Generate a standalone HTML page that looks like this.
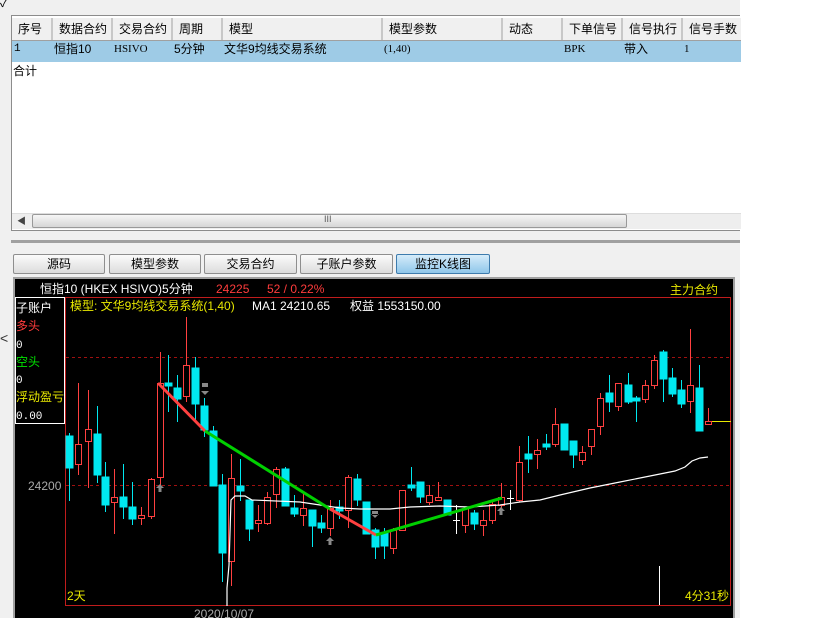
<!DOCTYPE html>
<html><head><meta charset="utf-8"><style>
*{margin:0;padding:0;box-sizing:border-box}
body{width:819px;height:618px;background:#fff;position:relative;overflow:hidden;font-family:"Liberation Sans","Noto Sans CJK SC",sans-serif;font-size:12px;color:#000}
.abs{position:absolute}
#win{left:0;top:0;width:740px;height:618px;background:#f0f0f0}
#tbl{left:11px;top:15px;width:729px;height:216px;background:#fff;border:1px solid #8c8c8c;border-right:none}
.hd{position:absolute;top:2px;height:22px;line-height:22px;padding-left:6px;background:#f0f0f0;border-right:2px solid #c8c8c8;font-size:12px}
.rw{position:absolute;top:25px;left:0;width:729px;height:21px;background:#9ecbe6;font-size:12px;line-height:16px}
.rw span{position:absolute;top:0}
.btn{position:absolute;top:254px;height:20px;border:1px solid #8e8e8e;border-radius:2px;background:linear-gradient(#fbfbfb,#dcdcdc);text-align:center;line-height:18px;font-size:12px}
</style></head><body>
<div id="win" class="abs"></div>
<div class="abs" style="left:0;top:-6px;font-size:12px">✓</div>
<div id="tbl" class="abs">
 <div class="hd" style="left:0;width:41px">序号</div>
 <div class="hd" style="left:41px;width:60px">数据合约</div>
 <div class="hd" style="left:101px;width:60px">交易合约</div>
 <div class="hd" style="left:161px;width:50px">周期</div>
 <div class="hd" style="left:211px;width:160px">模型</div>
 <div class="hd" style="left:371px;width:120px">模型参数</div>
 <div class="hd" style="left:491px;width:60px">动态</div>
 <div class="hd" style="left:551px;width:60px">下单信号</div>
 <div class="hd" style="left:611px;width:60px">信号执行</div>
 <div class="hd" style="left:671px;width:58px;border-right:none">信号手数</div>
 <div class="abs" style="left:0;top:24px;width:729px;height:1px;background:#a0a0a0"></div>
 <div class="rw">
  <span style="left:2px;font-family:'Liberation Mono',monospace;font-size:11px">1</span>
  <span style="left:42px">恒指10</span>
  <span style="left:102px;font-family:'Liberation Serif',serif;font-size:11px">HSIVO</span>
  <span style="left:162px">5分钟</span>
  <span style="left:212px">文华9均线交易系统</span>
  <span style="left:372px;font-family:'Liberation Serif',serif;font-size:11px">(1,40)</span>
  <span style="left:552px;font-family:'Liberation Serif',serif;font-size:11px">BPK</span>
  <span style="left:612px">带入</span>
  <span style="left:672px;font-family:'Liberation Serif',serif;font-size:11px">1</span>
 </div>
 <div class="abs" style="left:1px;top:46px;font-size:12px">合计</div>
 <div class="abs" style="left:0;top:197px;width:729px;height:16px;background:#eee;border-top:1px solid #ddd"></div>
 <div class="abs" style="left:5px;top:198px;font-size:9px;color:#444">◀</div>
 <div class="abs" style="left:20px;top:198px;width:595px;height:14px;border:1px solid #999;border-radius:2px;background:linear-gradient(#f6f6f6,#d6d6d6)"></div>
 <div class="abs" style="left:312px;top:198px;font-size:9px;color:#555">III</div>
</div>
<div class="abs" style="left:11px;top:240px;width:729px;height:3px;background:#a0a0a0"></div>
<div class="btn" style="left:13px;width:92px">源码</div>
<div class="btn" style="left:109px;width:92px">模型参数</div>
<div class="btn" style="left:204px;width:93px">交易合约</div>
<div class="btn" style="left:300px;width:93px">子账户参数</div>
<div class="btn" style="left:396px;width:94px;background:linear-gradient(#d6ecfa,#8fc6ea);border-color:#3d7bad">监控K线图</div>
<div class="abs" style="left:13px;top:277px;width:722px;height:341px;background:#a0a0a0"></div>
<div class="abs" style="left:0;top:330px;font-size:14px;color:#333">&lt;</div>
<svg class="abs" style="left:15px;top:279px" width="718" height="339" viewBox="15 279 718 339" font-family="Liberation Sans, Noto Sans CJK SC, sans-serif">
<rect x="15" y="279" width="718" height="339" fill="#000"/>
<text x="40" y="293" fill="#fff" font-size="12">恒指10  (HKEX HSIVO)5分钟</text>
<text x="216" y="293" fill="#ff3c3c" font-size="12">24225</text>
<text x="267" y="293" fill="#ff3c3c" font-size="12">52 / 0.22%</text>
<text x="670" y="294" fill="#e8e800" font-size="12">主力合约</text>
<rect x="65.5" y="297.5" width="665" height="308" fill="none" stroke="#c01c1c"/>
<rect x="15.5" y="297.5" width="49" height="126" fill="none" stroke="#fff"/>
<g font-size="12">
<text x="16" y="312" fill="#fff">子账户</text>
<text x="16" y="330" fill="#ff3c3c">多头</text>
<text x="16" y="348" fill="#fff" font-family="Liberation Mono,monospace" font-size="11">0</text>
<text x="16" y="366" fill="#00e000">空头</text>
<text x="16" y="383" fill="#fff" font-family="Liberation Mono,monospace" font-size="11">0</text>
<text x="16" y="401" fill="#e8e800">浮动盈亏</text>
<text x="16" y="419" fill="#fff" font-family="Liberation Mono,monospace" font-size="11">0.00</text>
<text x="70" y="310" fill="#e8e800">模型: 文华9均线交易系统(1,40)</text>
<text x="252" y="310" fill="#fff">MA1 24210.65</text>
<text x="350" y="310" fill="#fff">权益 1553150.00</text>
<text x="28" y="490" fill="#aaa">24200</text>
<text x="67" y="600" fill="#e8e800">2天</text>
<text x="685" y="600" fill="#e8e800">4分31秒</text>
<text x="194" y="618" fill="#aaa">2020/10/07</text>
</g>
<line x1="66" y1="357.5" x2="730" y2="357.5" stroke="#a01010" stroke-dasharray="3,3"/>
<line x1="66" y1="485.5" x2="730" y2="485.5" stroke="#a01010" stroke-dasharray="3,3"/>
<line x1="659.5" y1="566" x2="659.5" y2="605" stroke="#fff"/>
<line x1="712" y1="421.5" x2="731" y2="421.5" stroke="#e8e800"/>
<g stroke="#00e8f0" fill="#00e8f0">
<line x1="69.5" y1="433" x2="69.5" y2="501"/><rect x="66" y="436" width="7" height="32"/>
<line x1="97.5" y1="406" x2="97.5" y2="483"/><rect x="94" y="434" width="7" height="41"/>
<line x1="105.5" y1="462" x2="105.5" y2="512"/><rect x="102" y="477" width="7" height="28"/>
<line x1="123.5" y1="464" x2="123.5" y2="519"/><rect x="120" y="497" width="7" height="10"/>
<line x1="132.5" y1="482" x2="132.5" y2="525"/><rect x="129" y="507" width="7" height="12"/>
<line x1="168.5" y1="355" x2="168.5" y2="412"/><rect x="165" y="383" width="7" height="3"/>
<line x1="177.5" y1="375" x2="177.5" y2="422"/><rect x="174" y="388" width="7" height="11"/>
<line x1="195.5" y1="357" x2="195.5" y2="420"/><rect x="192" y="368" width="7" height="36"/>
<line x1="204.5" y1="398" x2="204.5" y2="437"/><rect x="201" y="406" width="7" height="24"/>
<line x1="213.5" y1="426" x2="213.5" y2="486"/><rect x="210" y="431" width="7" height="55"/>
<line x1="222.5" y1="474" x2="222.5" y2="582"/><rect x="219" y="485" width="7" height="68"/>
<line x1="240.5" y1="459" x2="240.5" y2="501"/><rect x="237" y="486" width="7" height="5"/>
<line x1="249.5" y1="500" x2="249.5" y2="541"/><rect x="246" y="500" width="7" height="29"/>
<line x1="285.5" y1="467" x2="285.5" y2="506"/><rect x="282" y="469" width="7" height="37"/>
<line x1="294.5" y1="495" x2="294.5" y2="517"/><rect x="291" y="508" width="7" height="6"/>
<line x1="312.5" y1="510" x2="312.5" y2="547"/><rect x="309" y="510" width="7" height="16"/>
<line x1="321.5" y1="515" x2="321.5" y2="533"/><rect x="318" y="523" width="7" height="5"/>
<line x1="339.5" y1="500" x2="339.5" y2="519"/><rect x="336" y="507" width="7" height="4"/>
<line x1="357.5" y1="474" x2="357.5" y2="506"/><rect x="354" y="479" width="7" height="21"/>
<line x1="366.5" y1="502" x2="366.5" y2="534"/><rect x="363" y="502" width="7" height="32"/>
<line x1="375.5" y1="528" x2="375.5" y2="559"/><rect x="372" y="530" width="7" height="17"/>
<line x1="384.5" y1="528" x2="384.5" y2="559"/><rect x="381" y="533" width="7" height="13"/>
<line x1="411.5" y1="467" x2="411.5" y2="491"/><rect x="408" y="485" width="7" height="3"/>
<line x1="420.5" y1="482" x2="420.5" y2="503"/><rect x="417" y="482" width="7" height="15"/>
<line x1="447.5" y1="500" x2="447.5" y2="515"/><rect x="444" y="500" width="7" height="15"/>
<line x1="474.5" y1="510" x2="474.5" y2="530"/><rect x="471" y="513" width="7" height="11"/>
<line x1="528.5" y1="436" x2="528.5" y2="473"/><rect x="525" y="454" width="7" height="5"/>
<line x1="546.5" y1="434" x2="546.5" y2="450"/><rect x="543" y="444" width="7" height="3"/>
<line x1="564.5" y1="424" x2="564.5" y2="450"/><rect x="561" y="424" width="7" height="26"/>
<line x1="573.5" y1="441" x2="573.5" y2="468"/><rect x="570" y="441" width="7" height="14"/>
<line x1="609.5" y1="375" x2="609.5" y2="412"/><rect x="606" y="393" width="7" height="9"/>
<line x1="628.5" y1="373" x2="628.5" y2="404"/><rect x="625" y="385" width="7" height="17"/>
<line x1="636.5" y1="396" x2="636.5" y2="422"/><rect x="633" y="398" width="7" height="3"/>
<line x1="663.5" y1="350" x2="663.5" y2="402"/><rect x="660" y="352" width="7" height="27"/>
<line x1="672.5" y1="368" x2="672.5" y2="397"/><rect x="669" y="378" width="7" height="16"/>
<line x1="681.5" y1="380" x2="681.5" y2="408"/><rect x="678" y="390" width="7" height="14"/>
<line x1="699.5" y1="365" x2="699.5" y2="431"/><rect x="696" y="388" width="7" height="43"/>
</g>
<g stroke="#ff4040" fill="none">
<line x1="78.5" y1="383" x2="78.5" y2="475"/><rect x="75.5" y="444.5" width="6" height="20" fill="#000"/>
<line x1="88.5" y1="390" x2="88.5" y2="488"/><rect x="85.5" y="429.5" width="6" height="12" fill="#000"/>
<line x1="114.5" y1="469" x2="114.5" y2="534"/><rect x="111.5" y="497.5" width="6" height="5" fill="#000"/>
<line x1="141.5" y1="507" x2="141.5" y2="525"/><rect x="138.5" y="515.5" width="6" height="3" fill="#000"/>
<line x1="151.5" y1="478" x2="151.5" y2="519"/><rect x="148.5" y="479.5" width="6" height="37" fill="#000"/>
<line x1="160.5" y1="352" x2="160.5" y2="486"/><rect x="157.5" y="383.5" width="6" height="94" fill="#000"/>
<line x1="186.5" y1="317" x2="186.5" y2="402"/><rect x="183.5" y="365.5" width="6" height="31" fill="#000"/>
<line x1="231.5" y1="454" x2="231.5" y2="586"/><rect x="228.5" y="478.5" width="6" height="83" fill="#000"/>
<line x1="258.5" y1="505" x2="258.5" y2="532"/><rect x="255.5" y="520.5" width="6" height="3" fill="#000"/>
<line x1="267.5" y1="492" x2="267.5" y2="525"/><rect x="264.5" y="497.5" width="6" height="26" fill="#000"/>
<line x1="276.5" y1="467" x2="276.5" y2="508"/><rect x="273.5" y="469.5" width="6" height="25" fill="#000"/>
<line x1="303.5" y1="493" x2="303.5" y2="526"/><rect x="300.5" y="508.5" width="6" height="7" fill="#000"/>
<line x1="330.5" y1="500" x2="330.5" y2="536"/><rect x="327.5" y="508.5" width="6" height="20" fill="#000"/>
<line x1="348.5" y1="475" x2="348.5" y2="528"/><rect x="345.5" y="477.5" width="6" height="33" fill="#000"/>
<line x1="393.5" y1="528" x2="393.5" y2="554"/><rect x="390.5" y="530.5" width="6" height="18" fill="#000"/>
<line x1="402.5" y1="490" x2="402.5" y2="531"/><rect x="399.5" y="490.5" width="6" height="40" fill="#000"/>
<line x1="429.5" y1="485" x2="429.5" y2="505"/><rect x="426.5" y="495.5" width="6" height="7" fill="#000"/>
<line x1="438.5" y1="482" x2="438.5" y2="500"/><rect x="435.5" y="497.5" width="6" height="3" fill="#000"/>
<line x1="465.5" y1="508" x2="465.5" y2="533"/><rect x="462.5" y="508.5" width="6" height="17" fill="#000"/>
<line x1="483.5" y1="510" x2="483.5" y2="536"/><rect x="480.5" y="520.5" width="6" height="5" fill="#000"/>
<line x1="492.5" y1="500" x2="492.5" y2="524"/><rect x="489.5" y="504.5" width="6" height="16" fill="#000"/>
<line x1="501.5" y1="483" x2="501.5" y2="512"/><rect x="498.5" y="497.5" width="6" height="8" fill="#000"/>
<line x1="519.5" y1="446" x2="519.5" y2="502"/><rect x="516.5" y="462.5" width="6" height="38" fill="#000"/>
<line x1="537.5" y1="439" x2="537.5" y2="469"/><rect x="534.5" y="450.5" width="6" height="4" fill="#000"/>
<line x1="555.5" y1="408" x2="555.5" y2="447"/><rect x="552.5" y="424.5" width="6" height="20" fill="#000"/>
<line x1="582.5" y1="446" x2="582.5" y2="465"/><rect x="579.5" y="452.5" width="6" height="8" fill="#000"/>
<line x1="591.5" y1="429" x2="591.5" y2="455"/><rect x="588.5" y="429.5" width="6" height="17" fill="#000"/>
<line x1="600.5" y1="393" x2="600.5" y2="435"/><rect x="597.5" y="398.5" width="6" height="28" fill="#000"/>
<line x1="618.5" y1="383" x2="618.5" y2="411"/><rect x="615.5" y="383.5" width="6" height="23" fill="#000"/>
<line x1="645.5" y1="380" x2="645.5" y2="403"/><rect x="642.5" y="385.5" width="6" height="14" fill="#000"/>
<line x1="654.5" y1="355" x2="654.5" y2="389"/><rect x="651.5" y="360.5" width="6" height="25" fill="#000"/>
<line x1="690.5" y1="329" x2="690.5" y2="413"/><rect x="687.5" y="385.5" width="6" height="16" fill="#000"/>
<line x1="708.5" y1="408" x2="708.5" y2="424"/><rect x="705.5" y="421.5" width="6" height="3" fill="#000"/>
</g>
<g stroke="#fff">
<line x1="456.5" y1="505" x2="456.5" y2="534"/><line x1="453" y1="520.5" x2="460" y2="520.5"/>
<line x1="510.5" y1="490" x2="510.5" y2="510"/><line x1="507" y1="498.5" x2="514" y2="498.5"/>
</g>
<polyline fill="none" stroke="#fff" stroke-width="1.2" points="227,606 227,588 229,565 231,500 235,496 245,496 252,500 300,502 320,505 340,508 360,509 390,509 410,507 440,506 470,507 500,505 520,502 540,500 560,495 590,488 620,482 650,476 675,471 685,467 692,461 700,458 708,457"/>
<polyline fill="none" stroke="#ff4040" stroke-width="3" points="158,383 205,431"/>
<polyline fill="none" stroke="#00d000" stroke-width="3" points="205,431 330,509"/>
<polyline fill="none" stroke="#ff4040" stroke-width="3" points="330,509 376,535"/>
<polyline fill="none" stroke="#00d000" stroke-width="3" points="376,535 502,498"/>
<g fill="#888">
<path d="M160,484 l-4,4 h2.5 v4 h3 v-4 h2.5z"/>
<path d="M205,387 h-3 v-4 h6 v4 h-3z M201,391 l4,4 4,-4z"/>
<path d="M330,537 l-4,4 h2.5 v4 h3 v-4 h2.5z"/>
<path d="M375,514 l-4,0 l4,4 l4,-4z M372,511 h6 v4 h-6z"/>
<path d="M501,507 l-4,4 h2.5 v4 h3 v-4 h2.5z"/>
</g>
</svg>
</body></html>
